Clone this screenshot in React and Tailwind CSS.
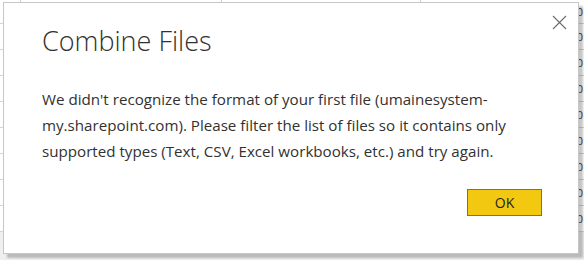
import React from "react";

const App = () => {
  return (
    <div className="relative w-[584px] h-[260px] overflow-hidden bg-white font-['Open_Sans',sans-serif]">
      {/* spreadsheet behind the dialog */}
      <div className="flex h-full flex-col">
        <div className="flex h-[24px] shrink-0 border-b border-[#d4d4d4]">
          <div className="w-[21px] border-r border-[#d4d4d4]" />
          <div className="w-[201px] border-r border-[#d4d4d4]" />
          <div className="w-[199px] border-r border-[#d4d4d4]" />
          <div className="flex flex-1 items-center justify-end overflow-hidden">
            <span className="mr-[1px] text-[11px] leading-none text-[#4a3a2a]">0</span>
          </div>
        </div>
        {[0, 1, 2, 3, 4, 5, 6, 7].map((i) => (
          <div key={i} className="flex h-[26px] shrink-0 items-center justify-end overflow-hidden border-b border-[#d4d4d4]">
            <span className="mr-[1px] text-[11px] leading-none text-[#4a3a2a]">0</span>
          </div>
        ))}
        <div className="flex-1 bg-[#f0efee]" />
      </div>

      {/* dialog */}
      <div className="absolute left-[3px] top-[2px] flex h-[252px] w-[576px] flex-col border border-[#c6c6c6] bg-white shadow-[4px_4px_2px_rgba(0,0,0,0.22)]">
        <button className="absolute right-[10px] top-[10px] flex h-[18px] w-[18px] items-center justify-center">
          <svg width="15" height="15" viewBox="0 0 15 15">
            <path d="M1 1L14 14M14 1L1 14" stroke="#6b6b6b" strokeWidth="1.1" fill="none" />
          </svg>
        </button>
        <div className="pl-[38px] pt-[20px]">
          <h1 className="text-[27px] font-light leading-[36px] text-[#323130]">
            Combine Files
          </h1>
          <p className="mt-[27px] whitespace-nowrap text-[15.15px] leading-[26px] text-[#323130]">
            We didn't recognize the format of your first file (umainesystem-
            <br />
            my.sharepoint.com). Please filter the list of files so it contains only
            <br />
            supported types (Text, CSV, Excel workbooks, etc.) and try again.
          </p>
        </div>
        <div className="mt-[25px] flex justify-end pr-[36px]">
          <button className="h-[27px] w-[75px] border border-[#707070] bg-[#f2c811] text-[14px] text-[#252423]">
            OK
          </button>
        </div>
      </div>
    </div>
  );
};

export default App;
